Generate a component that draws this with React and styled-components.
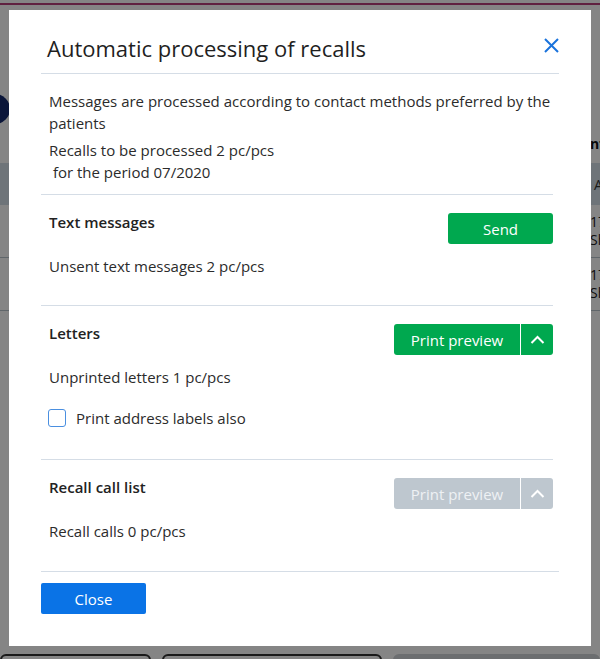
import React from 'react'
import styled, { createGlobalStyle } from 'styled-components'

const GlobalStyle = createGlobalStyle`
  html, body {
    margin: 0;
    padding: 0;
  }
  body {
    font-family: "Open Sans", "Noto Sans", sans-serif;
    background: #ffffff;
    color: #222;
  }
`

const sections = [
  { title: 'Text messages', text: 'Unsent text messages 2 pc/pcs', action: 'send' },
  { title: 'Letters', text: 'Unprinted letters 1 pc/pcs', action: 'split', checkbox: 'Print address labels also' },
  { title: 'Recall call list', text: 'Recall calls 0 pc/pcs', action: 'split', disabled: true },
]

export default function App() {
  return (
    <>
      <GlobalStyle />
      <Page>
        <TopLine />
        <Toolbar>
          <Avatar />
          <ToolbarLabel>Information</ToolbarLabel>
        </Toolbar>
        <TableHead>
          <span>Appointment</span>
        </TableHead>
        <TableRow><span>17/</span><span>Sh</span></TableRow>
        <TableRow><span>17/</span><span>Sh</span></TableRow>
        <Spacer />
        <Tabs>
          <Tab $w={152} />
          <Tab $w={224} />
          <Tab $w={210} $fill />
        </Tabs>
      </Page>

      <Overlay>
        <Modal>
          <Header>
            <Title>Automatic processing of recalls</Title>
            <CloseIcon aria-label="close">
              <svg width="15" height="15" viewBox="0 0 15 15">
                <path d="M1 1 L14 14 M14 1 L1 14" stroke="#1a73dc" strokeWidth="2" fill="none" />
              </svg>
            </CloseIcon>
          </Header>

          <Body>
            <Intro>
              <Para>Messages are processed according to contact methods preferred by the patients</Para>
              <Para>
                Recalls to be processed 2 pc/pcs
                <br />
                &nbsp;for the period 07/2020
              </Para>
            </Intro>

            {sections.map((s) => (
              <Section key={s.title}>
                <SectionHead>
                  <SectionTitle>{s.title}</SectionTitle>
                  {s.action === 'send' ? (
                    <Button $w={105}>Send</Button>
                  ) : (
                    <SplitGroup>
                      <Button $w={126} $disabled={s.disabled} $split>Print preview</Button>
                      <Button $w={32} $disabled={s.disabled} $caret>
                        <svg width="15" height="10" viewBox="0 0 15 10">
                          <path d="M1.5 8 L7.5 2 L13.5 8" stroke="#fff" strokeWidth="2" fill="none" />
                        </svg>
                      </Button>
                    </SplitGroup>
                  )}
                </SectionHead>
                <Count>{s.text}</Count>
                {s.checkbox && (
                  <CheckRow>
                    <Box />
                    <span>{s.checkbox}</span>
                  </CheckRow>
                )}
              </Section>
            ))}
          </Body>

          <Footer>
            <CloseButton>Close</CloseButton>
          </Footer>
        </Modal>
      </Overlay>
    </>
  )
}

const Page = styled.div`
  height: 659px;
  display: flex;
  flex-direction: column;
  overflow: hidden;
`

const TopLine = styled.div`
  height: 3px;
  border-bottom: 2px solid #b8407c;
  background: #ffffff;
`

const Toolbar = styled.div`
  height: 158px;
  display: flex;
  align-items: flex-start;
  justify-content: space-between;
  padding-top: 89px;
  box-sizing: border-box;
`

const Avatar = styled.div`
  width: 30px;
  height: 30px;
  margin-left: -20px;
  border-radius: 50%;
  background: #142a6e;
`

const ToolbarLabel = styled.div`
  margin-top: 40px;
  margin-right: -70px;
  font-weight: 700;
  font-size: 14px;
  color: #111;
`

const TableHead = styled.div`
  height: 42px;
  background: #d4dfe8;
  display: flex;
  justify-content: flex-end;
  align-items: center;
  font-size: 14px;
  color: #333;
  span { margin-right: -80px; }
`

const TableRow = styled.div`
  height: 52px;
  border-bottom: 1px solid #b9c3cc;
  display: flex;
  flex-direction: column;
  align-items: flex-end;
  justify-content: center;
  font-size: 14px;
  line-height: 18px;
  color: #222;
  span { width: 10px; overflow: hidden; }
`

const Spacer = styled.div`
  flex: 1;
`

const Tabs = styled.div`
  height: 10px;
  display: flex;
  gap: 11px;
  margin-bottom: -5px;
`

const Tab = styled.div`
  width: ${(p) => p.$w}px;
  border: 2px solid #333;
  border-radius: 6px 6px 0 0;
  background: ${(p) => (p.$fill ? '#cfd3d6' : '#ffffff')};
  border-color: ${(p) => (p.$fill ? '#cfd3d6' : '#333')};
`

const Overlay = styled.div`
  position: fixed;
  inset: 0;
  background: rgba(0, 0, 0, 0.48);
  display: flex;
  align-items: flex-start;
  padding: 10px 9px 0;
`

const Modal = styled.div`
  width: 582px;
  height: 636px;
  background: #fff;
  box-sizing: border-box;
  padding: 0 32px;
  display: flex;
  flex-direction: column;
`

const Header = styled.div`
  height: 64px;
  box-sizing: border-box;
  border-bottom: 1px solid #d5dde6;
  display: flex;
  align-items: flex-start;
  justify-content: space-between;
  padding-left: 6px;
`

const Title = styled.h1`
  margin: 23px 0 0;
  font-size: 22px;
  line-height: 30px;
  font-weight: 400;
  color: #1f1f1f;
`

const CloseIcon = styled.div`
  width: 15px;
  height: 15px;
  margin-top: 26px;
`

const Body = styled.div`
  margin-right: 6px;
`

const Intro = styled.div`
  padding: 16px 0 11px 8px;
  display: flex;
  flex-direction: column;
  gap: 5px;
`

const Para = styled.div`
  font-size: 15px;
  line-height: 22px;
  color: #2b2b2b;
`

const Count = styled(Para)`
  margin-top: 11px;
`

const Section = styled.div`
  border-top: 1px solid #d5dde6;
  padding: 16px 0 28px 8px;
  display: flex;
  flex-direction: column;
`

const SectionHead = styled.div`
  display: flex;
  justify-content: space-between;
  align-items: flex-start;
  height: 33px;
`

const SectionTitle = styled.div`
  font-size: 15px;
  line-height: 22px;
  font-weight: 600;
  color: #222;
`

const SplitGroup = styled.div`
  display: flex;
  gap: 1px;
  margin-top: 2px;
`

const Button = styled.button`
  width: ${(p) => p.$w}px;
  height: 31px;
  margin-top: ${(p) => (p.$split || p.$caret ? 0 : 2)}px;
  border: none;
  border-radius: ${(p) => (p.$split ? '3px 0 0 3px' : p.$caret ? '0 3px 3px 0' : '3px')};
  background: ${(p) => (p.$disabled ? '#bec7cf' : '#00a84f')};
  color: ${(p) => (p.$disabled ? '#eef1f4' : '#ffffff')};
  font-family: "Open Sans", "Noto Sans", sans-serif;
  font-size: 15px;
  display: flex;
  align-items: center;
  justify-content: center;
  padding: 0;
`

const CheckRow = styled.label`
  display: flex;
  align-items: center;
  gap: 10px;
  font-size: 15px;
  line-height: 22px;
  color: #2b2b2b;
  margin-top: 19px;
  margin-bottom: 2px;
`

const Box = styled.span`
  width: 16px;
  height: 16px;
  border: 1.5px solid #4a8fe0;
  border-radius: 3px;
  margin-left: -1px;
`

const Footer = styled.div`
  border-top: 1px solid #d5dde6;
  margin-top: 1px;
  padding-top: 11px;
`

const CloseButton = styled.button`
  width: 105px;
  height: 31px;
  border: none;
  border-radius: 2px;
  background: #0a73e6;
  color: #fff;
  font-family: "Open Sans", "Noto Sans", sans-serif;
  font-size: 15px;
`
